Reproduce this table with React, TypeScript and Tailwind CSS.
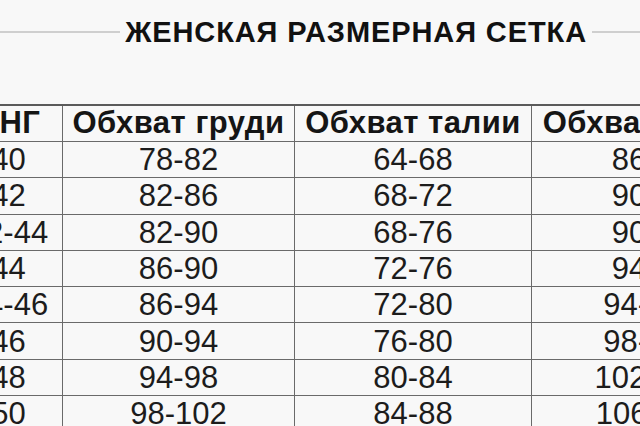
import React from 'react';

const rows: [string, string, string, string][] = [
  ['40', '78-82', '64-68', '86-90'],
  ['42', '82-86', '68-72', '90-94'],
  ['42-44', '82-90', '68-76', '90-98'],
  ['44', '86-90', '72-76', '94-98'],
  ['44-46', '86-94', '72-80', '94-102'],
  ['46', '90-94', '76-80', '98-102'],
  ['48', '94-98', '80-84', '102-106'],
  ['50', '98-102', '84-88', '106-110'],
];

const headers = ['СНГ', 'Обхват груди', 'Обхват талии', 'Обхват бедер'];

const cols = 'grid grid-cols-[108px_232px_237px_240px]';

export default function App() {
  return (
    <div
      className="w-[640px] h-[426px] overflow-hidden bg-[#f8f8f8] text-[#1c1c1c]"
      style={{ fontFamily: '"Liberation Sans", Arial, sans-serif' }}
    >
      {/* Title with side rules */}
      <div className="flex items-center h-[64px]">
        <div className="flex-1 h-[2px] bg-[#cfcfcf]" />
        <h1 className="px-[5px] text-[29px] font-bold leading-none text-[#111] tracking-[0.9px] whitespace-nowrap">
          ЖЕНСКАЯ РАЗМЕРНАЯ СЕТКА
        </h1>
        <div className="w-[48px] h-[2px] bg-[#cfcfcf]" />
      </div>

      {/* Size table */}
      <div className="mt-[40px] ml-[-45px] w-[820px] border-t-2 border-[#5a5a5a]">
        <div className={cols}>
          {headers.map((h) => (
            <div
              key={h}
              className="h-[36px] flex items-center justify-center border-r border-b border-[#6a6a6a] text-[31px] font-bold tracking-[0.5px] text-[#151515] whitespace-nowrap"
            >
              {h}
            </div>
          ))}
        </div>
        {rows.map((r, i) => (
          <div key={i} className={cols}>
            {r.map((c, j) => (
              <div
                key={j}
                className="h-[36.3px] flex items-center justify-center border-r border-b border-[#6a6a6a] text-[31px] leading-none whitespace-nowrap"
              >
                {c}
              </div>
            ))}
          </div>
        ))}
      </div>
    </div>
  );
}
